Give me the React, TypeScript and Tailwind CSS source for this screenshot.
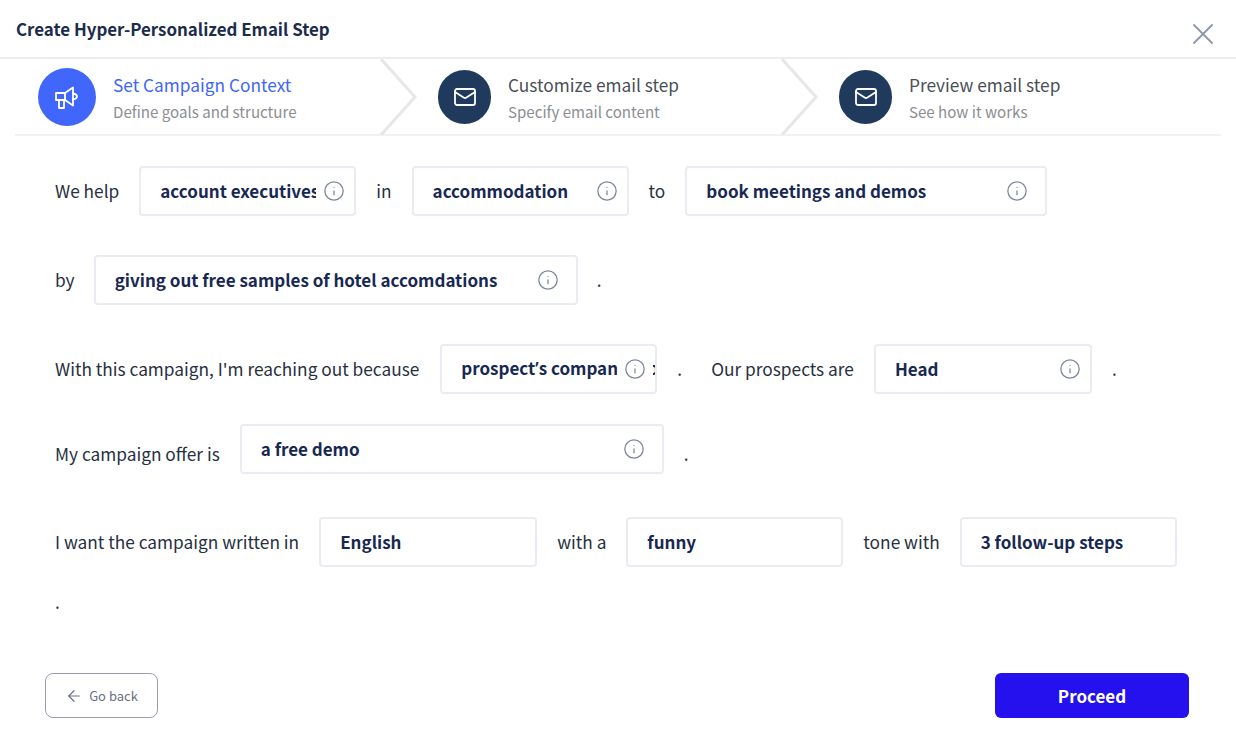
import React from 'react';
import { ArrowLeft, Info, Mail, X } from 'lucide-react';

const font = "font-['Noto_Sans_CJK_SC','Liberation_Sans',sans-serif]";

const Megaphone = () => (
  <svg width="24" height="24" viewBox="0 0 24 24" fill="none" stroke="white" strokeWidth="1.8" strokeLinejoin="round" strokeLinecap="round">
    <path d="M1 8h9v7H1z" />
    <path d="M10 8l8-5.500v18L10 15" />
    <path d="M18 8.500c2.500.5 4 1.700 4 3s-1.500 2.500-4 3" />
    <path d="M4 15v8h5v-8" />
  </svg>
);

interface StepProps {
  title: string;
  subtitle: string;
  active?: boolean;
  last?: boolean;
}

const Step: React.FC<StepProps> = ({ title, subtitle, active, last }) => (
  <div className={`relative flex items-center ${last ? 'flex-1 pl-[22px]' : active ? 'w-[401px] pl-[23px]' : 'w-[401px] pl-[22px]'}`}>
    <div
      className={`flex shrink-0 items-center justify-center rounded-full ${
        active ? 'h-[58px] w-[58px] bg-[#4066fb]' : 'h-[54px] w-[53px] bg-[#203a5d]'
      }`}
    >
      {active ? <Megaphone /> : <Mail size={24} color="white" strokeWidth={1.8} />}
    </div>
    <div className="ml-[17px] mt-[2px]">
      <div className={`text-[17.300px] leading-[26px] ${active ? 'text-[#3f66fb]' : 'text-[#4a4f57]'}`}>{title}</div>
      <div className="text-[15.100px] leading-[26px] text-[#8b8e93]">{subtitle}</div>
    </div>
    {!last && (
      <svg className="absolute right-[-2px] top-0" width="38" height="76" viewBox="0 0 38 76" fill="none">
        <path d="M1 0l34 38L1 76" stroke="#e6e7e9" strokeWidth="3" />
      </svg>
    )}
  </div>
);

interface FieldProps {
  value: React.ReactNode;
  width: string;
  icon?: boolean;
  wide?: boolean;
}

const Field: React.FC<FieldProps> = ({ value, width, icon = true, wide }) => (
  <div className={`relative flex h-[50px] shrink-0 items-center overflow-hidden rounded-[4px] border-2 border-[#e9ecf2] bg-white pb-px pl-[19px] ${width}`}>
    <span className="whitespace-nowrap text-[17px] font-semibold text-[#172853]">{value}</span>
    {icon && (
      <span className={`absolute top-0 flex h-full w-[36px] items-center justify-center bg-white ${wide ? 'right-[10px]' : 'right-[2px]'}`}>
        <Info size={22} color="#7d859c" strokeWidth={1.4} />
      </span>
    )}
  </div>
);

const Label = ({ children }: { children: React.ReactNode }) => (
  <span className="whitespace-nowrap pb-px text-[17.300px] text-[#27303f]">{children}</span>
);

export default function App() {
  return (
    <div className={`h-[730px] w-[1236px] overflow-hidden bg-white ${font}`}>
      <header className="flex h-[59px] items-center justify-between border-b-2 border-[#eceef0] pl-4 pr-[15px]">
        <h1 className="text-[16.900px] font-semibold text-[#1c2c4c]">Create Hyper-Personalized Email Step</h1>
        <X size={36} color="#8d97a8" strokeWidth={1.200} className="mt-[11px]" />
      </header>

      <div className="mx-[15px] flex h-[77px] border-b-2 border-[#f1f2f3]">
        <Step title="Set Campaign Context" subtitle="Define goals and structure" active />
        <Step title="Customize email step" subtitle="Specify email content" />
        <Step title="Preview email step" subtitle="See how it works" last />
      </div>

      <main className="px-[55px] pt-[30px]">
        <div className="flex items-center gap-5">
          <Label>We help</Label>
          <Field value="account executives" width="w-[217px]" />
          <Label>in</Label>
          <Field value="accommodation" width="w-[217px]" />
          <Label>to</Label>
          <Field value="book meetings and demos" width="w-[362px]" wide />
        </div>

        <div className="mt-[39px] flex items-center gap-[19px]">
          <Label>by</Label>
          <Field value="giving out free samples of hotel accomdations" width="w-[484px]" wide />
          <Label>.</Label>
        </div>

        <div className="mt-[39px] flex items-center gap-5">
          <Label>With this campaign, I'm reaching out because</Label>
          <Field
            value={
              <>
                prospect<span className="font-['Noto_Sans']">’</span>s company job,
              </>
            }
            width="ml-px w-[217px]"
          />
          <Label>.</Label>
          <span className="ml-[9px]">
            <Label>Our prospects are</Label>
          </span>
          <Field value="Head" width="w-[218px]" />
          <Label>.</Label>
        </div>

        <div className="mt-[30px] flex gap-5">
          <span className="mt-[17px]">
            <Label>My campaign offer is</Label>
          </span>
          <Field value="a free demo" width="w-[424px]" wide />
          <span className="mt-[17px]">
            <Label>.</Label>
          </span>
        </div>

        <div className="mt-[43px] flex items-center gap-5">
          <Label>I want the campaign written in</Label>
          <Field value="English" width="w-[218px]" icon={false} />
          <Label>with a</Label>
          <Field value="funny" width="w-[217px]" icon={false} />
          <Label>tone with</Label>
          <Field value="3 follow-up steps" width="w-[217px]" icon={false} />
        </div>
        <div className="mt-[19px] leading-[32px]">
          <Label>.</Label>
        </div>
      </main>

      <footer className="mt-[55px] flex items-center justify-between pl-[45px] pr-[47px]">
        <button className="flex h-[45px] w-[113px] items-center justify-center gap-[6px] rounded-[8px] border border-[#9a9fae] bg-white text-[13px] text-[#686f82]">
          <ArrowLeft size={18} strokeWidth={1.500} />
          Go back
        </button>
        <button className="h-[45px] w-[194px] rounded-[6px] bg-[#2411ee] text-[17px] font-semibold text-white">Proceed</button>
      </footer>
    </div>
  );
}
